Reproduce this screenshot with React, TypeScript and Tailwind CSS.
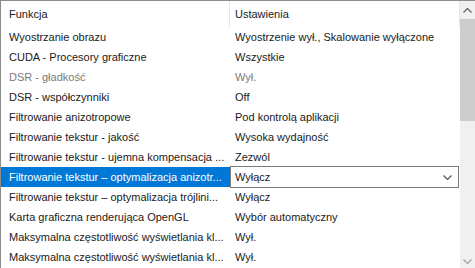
type Row = { funkcja: string; ustawienie: string; disabled?: boolean; selected?: boolean }

const ROWS: Row[] = [
  { funkcja: 'Wyostrzanie obrazu', ustawienie: 'Wyostrzenie wył., Skalowanie wyłączone' },
  { funkcja: 'CUDA - Procesory graficzne', ustawienie: 'Wszystkie' },
  { funkcja: 'DSR - gładkość', ustawienie: 'Wył.', disabled: true },
  { funkcja: 'DSR - współczynniki', ustawienie: 'Off' },
  { funkcja: 'Filtrowanie anizotropowe', ustawienie: 'Pod kontrolą aplikacji' },
  { funkcja: 'Filtrowanie tekstur - jakość', ustawienie: 'Wysoka wydajność' },
  { funkcja: 'Filtrowanie tekstur - ujemna kompensacja ...', ustawienie: 'Zezwól' },
  { funkcja: 'Filtrowanie tekstur – optymalizacja anizotr...', ustawienie: 'Wyłącz', selected: true },
  { funkcja: 'Filtrowanie tekstur – optymalizacja trójlini...', ustawienie: 'Wyłącz' },
  { funkcja: 'Karta graficzna renderująca OpenGL', ustawienie: 'Wybór automatyczny' },
  { funkcja: 'Maksymalna częstotliwość wyświetlania kl...', ustawienie: 'Wył.' },
  { funkcja: 'Maksymalna częstotliwość wyświetlania kl...', ustawienie: 'Wył.' },
]

function Chevron({ up, className }: { up?: boolean; className?: string }) {
  return (
    <svg width="9" height="5" viewBox="0 0 9 5" className={className}>
      <path d={up ? 'M0.5 4.5 L4.5 0.5 L8.5 4.5' : 'M0.5 0.5 L4.5 4.5 L8.5 0.5'} fill="none" stroke="currentColor" strokeWidth="1.2" />
    </svg>
  )
}

export default function App() {
  return (
    <div className="flex h-[268px] w-[475px] overflow-hidden border-l border-t border-[#8c8c8c] bg-white text-[11px] text-[#1a1a1a] [font-family:'Liberation_Sans',Arial,sans-serif]">
      <div className="flex flex-1 flex-col">
        {/* Nagłówek */}
        <div className="flex h-[26px] shrink-0 items-center">
          <div className="flex h-full w-[229px] items-center border-r border-[#e5e5e5] pl-[8px]">Funkcja</div>
          <div className="flex h-full flex-1 items-center border-r border-[#e5e5e5] pl-[5px]">Ustawienia</div>
        </div>

        {ROWS.map((row, i) =>
          row.selected ? (
            <div key={i} className="flex h-[20px] shrink-0 items-center">
              <div className="flex h-full w-[229px] items-center overflow-hidden whitespace-nowrap bg-[#0078d7] pl-[8px] text-white">
                {row.funkcja}
              </div>
              <div className="mr-[1px] flex h-[22px] flex-1 items-center justify-between border border-[#7a7a7a] bg-white pl-[4px] pr-[6px]">
                <span>{row.ustawienie}</span>
                <Chevron className="text-[#555]" />
              </div>
            </div>
          ) : (
            <div key={i} className={`flex h-[20px] shrink-0 items-center ${row.disabled ? 'text-[#7a7a7a]' : ''}`}>
              <div className="w-[229px] overflow-hidden whitespace-nowrap pl-[8px]">{row.funkcja}</div>
              <div className="flex-1 overflow-hidden whitespace-nowrap pl-[5px]">{row.ustawienie}</div>
            </div>
          )
        )}
      </div>

      {/* Pasek przewijania */}
      <div className="flex w-[15px] shrink-0 flex-col bg-[#f0f0f0]">
        <div className="flex h-[18px] items-center justify-center text-[#606060]">
          <Chevron up />
        </div>
        <div className="h-[102px] bg-[#cdcdcd]" />
        <div className="flex-1" />
        <div className="flex h-[14px] items-center justify-center text-[#a0a0a0]">
          <Chevron />
        </div>
      </div>
    </div>
  )
}
